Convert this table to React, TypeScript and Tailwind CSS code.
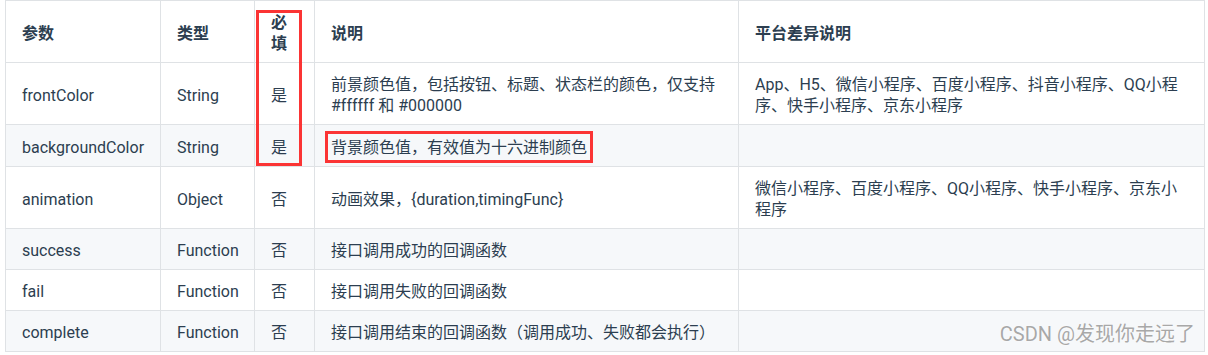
import React from "react";

const font = 'Roboto, "Noto Sans CJK SC", sans-serif';

type Row = {
  name: string;
  type: string;
  req: string;
  desc: React.ReactNode;
  plat: React.ReactNode;
  h: string;
  stripe: boolean;
};

const rows: Row[] = [
  {
    name: "frontColor",
    type: "String",
    req: "是",
    desc: (
      <>
        前景颜色值，包括按钮、标题、状态栏的颜色，仅支持
        <br />
        #ffffff 和 #000000
      </>
    ),
    plat: (
      <>
        App、H5、微信小程序、百度小程序、抖音小程序、QQ小程
        <br />
        序、快手小程序、京东小程序
      </>
    ),
    h: "h-[62px]",
    stripe: false,
  },
  {
    name: "backgroundColor",
    type: "String",
    req: "是",
    desc: "背景颜色值，有效值为十六进制颜色",
    plat: "",
    h: "h-[42px]",
    stripe: true,
  },
  {
    name: "animation",
    type: "Object",
    req: "否",
    desc: "动画效果，{duration,timingFunc}",
    plat: (
      <>
        微信小程序、百度小程序、QQ小程序、快手小程序、京东小
        <br />
        程序
      </>
    ),
    h: "h-[62px]",
    stripe: false,
  },
  {
    name: "success",
    type: "Function",
    req: "否",
    desc: "接口调用成功的回调函数",
    plat: "",
    h: "h-[41px]",
    stripe: true,
  },
  {
    name: "fail",
    type: "Function",
    req: "否",
    desc: "接口调用失败的回调函数",
    plat: "",
    h: "h-[41px]",
    stripe: false,
  },
  {
    name: "complete",
    type: "Function",
    req: "否",
    desc: "接口调用结束的回调函数（调用成功、失败都会执行）",
    plat: "",
    h: "h-[41px]",
    stripe: true,
  },
];

const cell = "border border-[#dfe2e5] px-4 pt-[3px] pb-0 align-middle leading-[21px] text-left";

export default function App() {
  return (
    <div
      className="relative w-[1208px] h-[355px] bg-white overflow-hidden text-[#2c3e50] text-[16px]"
      style={{ fontFamily: font }}
    >
      <table className="ml-[5px] w-[1199px] table-fixed border-collapse">
        <colgroup>
          <col className="w-[155px]" />
          <col className="w-[94px]" />
          <col className="w-[60px]" />
          <col className="w-[424px]" />
          <col className="w-[466px]" />
        </colgroup>
        <thead>
          <tr className="h-[62px]">
            <th className={`${cell} font-bold`}>参数</th>
            <th className={`${cell} font-bold`}>类型</th>
            <th className={`${cell} font-bold`}>必填</th>
            <th className={`${cell} font-bold`}>说明</th>
            <th className={`${cell} font-bold`}>平台差异说明</th>
          </tr>
        </thead>
        <tbody>
          {rows.map((r) => (
            <tr key={r.name} className={`${r.h} ${r.stripe ? "bg-[#f6f8fa]" : "bg-white"}`}>
              <td className={cell}>{r.name}</td>
              <td className={cell}>{r.type}</td>
              <td className={cell}>{r.req}</td>
              <td className={`${cell} whitespace-nowrap`}>
                {r.name === "backgroundColor" ? (
                  <span className="relative">
                    {r.desc}
                    <span className="absolute left-[-6px] right-[-6px] top-[-7px] bottom-[-6px] border-[3px] border-[#fb3434]" />
                  </span>
                ) : (
                  r.desc
                )}
              </td>
              <td className={`${cell} whitespace-nowrap`}>{r.plat}</td>
            </tr>
          ))}
        </tbody>
      </table>
      <div className="absolute left-[256px] top-[10px] w-[46px] h-[156px] border-[3px] border-[#fb3434]" />
      <div
        className="absolute right-[13px] top-[321px] text-[20px] leading-[26px] text-[#a8a8a8]"
        style={{ textShadow: "0 0 1px #fff, 0 0 2px #fff" }}
      >
        CSDN @发现你走远了
      </div>
    </div>
  );
}
